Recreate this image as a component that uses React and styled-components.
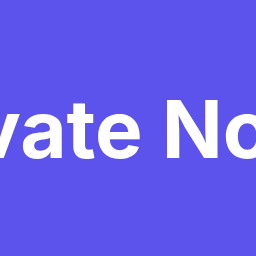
import React from "react";
import styled, { createGlobalStyle } from "styled-components";

const Global = createGlobalStyle`
  html, body { margin: 0; padding: 0; background: #5c53ec; }
  #root { width: 256px; height: 256px; }
`;

const Button = styled.div`
  width: 256px;
  height: 256px;
  overflow: hidden;
  background: #5c53ec;
  display: flex;
  align-items: center;
  justify-content: flex-start;
`;

const Label = styled.span`
  flex-shrink: 0;
  margin-left: ${(p) => p.$offset}px;
  margin-top: 2px;
  font-family: Inter, "Liberation Sans", sans-serif;
  font-weight: 700;
  font-size: 80px;
  line-height: 1;
  color: #ffffff;
  white-space: nowrap;
`;

export default function App() {
  return (
    <>
      <Global />
      <Button>
        <Label $offset={-183}>Activate Now</Label>
      </Button>
    </>
  );
}
